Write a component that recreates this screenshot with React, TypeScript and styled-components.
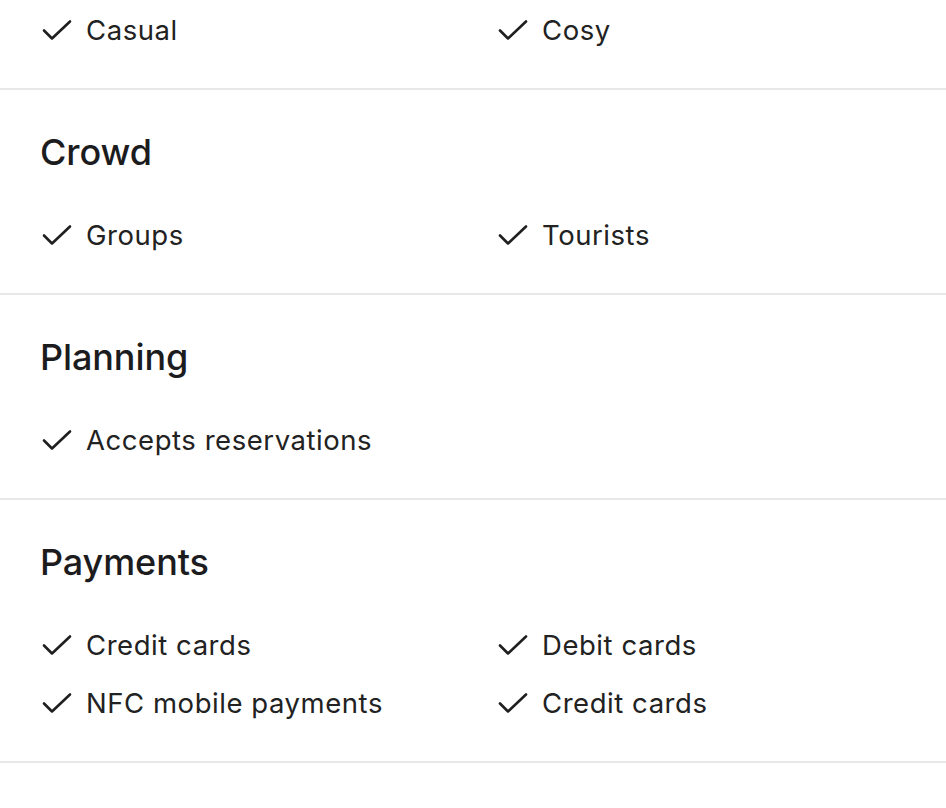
import React from 'react';
import styled, { createGlobalStyle } from 'styled-components';

const GlobalStyle = createGlobalStyle`
  html, body {
    margin: 0;
    padding: 0;
    background: #ffffff;
  }
  body {
    font-family: Inter, "Noto Sans", "Liberation Sans", sans-serif;
    color: #1f1f1f;
    -webkit-font-smoothing: antialiased;
  }
`;

const Page = styled.div`
  width: 946px;
  height: 808px;
  overflow: hidden;
  background: #fff;
`;

const Section = styled.section<{ $partial?: boolean }>`
  padding: ${({ $partial }) => ($partial ? '13px 38px 41px 40px' : '41px 38px 41px 40px')};
  border-bottom: 2px solid #e8e8e8;
`;

const Heading = styled.h2`
  margin: 0 0 45px;
  font-size: 36px;
  line-height: 42px;
  font-weight: 500;
  letter-spacing: -0.1px;
  color: #1c1c1e;
`;

const List = styled.ul`
  list-style: none;
  margin: 0;
  padding: 0;
  display: grid;
  grid-template-columns: 456px 1fr;
  row-gap: 24px;
`;

const Item = styled.li`
  display: flex;
  align-items: center;
  gap: 14px;
  height: 34px;
  font-size: 27.5px;
  font-weight: 400;
  letter-spacing: 0.55px;
  color: #222;
`;

const CheckIcon = () => (
  <svg width="32" height="24" viewBox="0 0 32 24" fill="none" style={{ flexShrink: 0 }}>
    <path
      d="M4 12.5 L12 20.5 L30 3.5"
      stroke="#1f1f1f"
      strokeWidth="2.6"
      strokeLinecap="round"
      strokeLinejoin="round"
    />
  </svg>
);

type Group = { title?: string; items: string[]; partial?: boolean };

const groups: Group[] = [
  { items: ['Casual', 'Cosy'], partial: true },
  { title: 'Crowd', items: ['Groups', 'Tourists'] },
  { title: 'Planning', items: ['Accepts reservations'] },
  { title: 'Payments', items: ['Credit cards', 'Debit cards', 'NFC mobile payments', 'Credit cards'] },
  { title: 'Children', items: ['Good for kids'] },
];

export default function App() {
  return (
    <>
      <GlobalStyle />
      <Page>
        {groups.map((g, i) => (
          <Section key={i} $partial={g.partial}>
            {g.title && <Heading>{g.title}</Heading>}
            <List>
              {g.items.map((it, j) => (
                <Item key={j}>
                  <CheckIcon />
                  <span>{it}</span>
                </Item>
              ))}
            </List>
          </Section>
        ))}
      </Page>
    </>
  );
}
